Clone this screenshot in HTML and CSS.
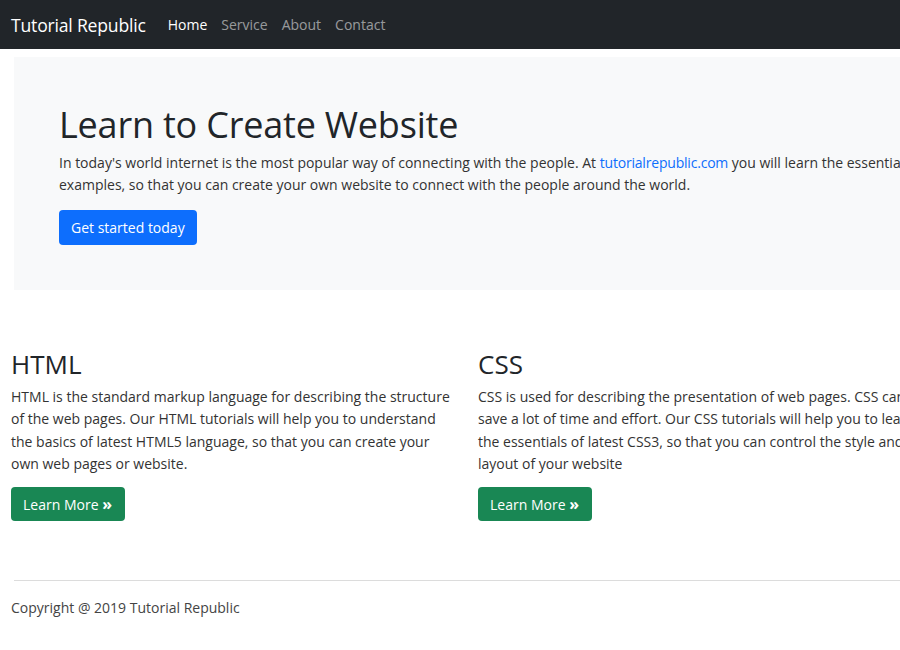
FILE: index.html
```html
<!DOCTYPE html>
<html lang="en">
<head>
<meta charset="utf-8">
<title>Tutorial Republic</title>
<link rel="stylesheet" href="styles.css">
</head>
<body>
<nav class="navbar">
  <span class="brand">Tutorial Republic</span>
  <ul class="nav-links">
    <li class="active">Home</li>
    <li>Service</li>
    <li>About</li>
    <li>Contact</li>
  </ul>
</nav>
<main class="page">
  <section class="hero">
    <h1 class="hero-title">Learn to Create Website</h1>
    <p class="hero-text">In today's world internet is the most popular way of connecting with the people. At <a class="link" href="#">tutorialrepublic.com</a> you will learn the essential web development technologies along with real life practice<br>examples, so that you can create your own website to connect with the people around the world.</p>
    <a class="btn btn-primary" href="#">Get started today</a>
  </section>
  <section class="cols">
    <div class="col">
      <h2 class="col-title">HTML</h2>
      <p class="col-text">HTML is the standard markup language for describing the structure<br>of the web pages. Our HTML tutorials will help you to understand<br>the basics of latest HTML5 language, so that you can create your<br>own web pages or website.</p>
      <a class="btn btn-success" href="#">Learn More <b class="raquo">&raquo;</b></a>
    </div>
    <div class="col">
      <h2 class="col-title">CSS</h2>
      <p class="col-text">CSS is used for describing the presentation of web pages. CSS can<br>save a lot of time and effort. Our CSS tutorials will help you to learn<br>the essentials of latest CSS3, so that you can control the style and<br>layout of your website</p>
      <a class="btn btn-success" href="#">Learn More <b class="raquo">&raquo;</b></a>
    </div>
  </section>
  <hr class="divider">
  <footer class="footer">Copyright @ 2019 Tutorial Republic</footer>
</main>
</body>
</html>
```
FILE: styles.css
```css
html, body {
  margin: 0;
  padding: 0;
  overflow: hidden;
  background: #fff;
}
body {
  width: 900px;
  font-family: "Open Sans", "Noto Sans", sans-serif;
  color: #212529;
  font-size: 14px;
}
.navbar {
  height: 49px;
  background: #212529;
  display: flex;
  align-items: center;
  padding-left: 11px;
  box-sizing: border-box;
  width: 900px;
}
.brand {
  color: #fff;
  font-size: 17.6px;
  letter-spacing: -0.2px;
}
.nav-links {
  list-style: none;
  display: flex;
  gap: 14px;
  margin: 0 0 0 22px;
  padding: 0;
  font-size: 14px;
  color: rgba(255,255,255,0.55);
}
.nav-links .active {
  color: #fff;
}
.page {
  width: 1400px;
}
.hero {
  margin: 8px 0 0 14px;
  height: 233px;
  box-sizing: border-box;
  background: #f8f9fa;
  padding: 46px 0 0 45px;
}
.hero-title {
  margin: 0;
  font-size: 36px;
  font-weight: 500;
  line-height: 1.2;
  letter-spacing: -0.2px;
}
.hero-text {
  margin: 6px 0 14px;
  white-space: nowrap;
  line-height: 22px;
  color: #333;
}
.link {
  color: #0d6efd;
  text-decoration: none;
  letter-spacing: -0.2px;
}
.btn {
  display: inline-block;
  text-decoration: none;
  color: #fff;
  border-radius: 4px;
  padding: 0 12px;
  height: 35px;
  line-height: 35px;
  font-size: 14px;
}
.btn-primary {
  background: #0d6efd;
}
.btn-success {
  background: #198754;
  height: 34px;
  line-height: 34px;
  padding: 0 13px 0 12px;
}
.raquo {
  font-weight: 700;
  font-size: 16px;
}
.cols {
  display: flex;
  gap: 22px;
  padding: 59px 0 0 11px;
}
.col {
  width: 445px;
}
.col-title {
  margin: 0 0 6px;
  font-size: 26px;
  font-weight: 500;
  line-height: 1.2;
}
.col-text {
  margin: 0 0 12px;
  white-space: nowrap;
  line-height: 22.3px;
  color: #333;
}
.divider {
  margin: 59px 0 0 14px;
  border: 0;
  border-top: 1px solid #dcdcdc;
}
.footer {
  padding: 17px 0 0 11px;
  color: #444;
}
```
